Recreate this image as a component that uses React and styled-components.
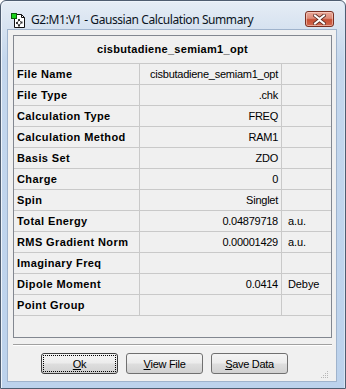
import React from 'react'
import styled, { createGlobalStyle } from 'styled-components'

const GlobalStyle = createGlobalStyle`
  html, body {
    margin: 0;
    padding: 0;
    background: #ffffff;
  }
  body {
    font-family: 'Liberation Sans', Arial, sans-serif;
  }
`

const rows = [
  { label: 'File Name', value: 'cisbutadiene_semiam1_opt', unit: '' },
  { label: 'File Type', value: '.chk', unit: '' },
  { label: 'Calculation Type', value: 'FREQ', unit: '' },
  { label: 'Calculation Method', value: 'RAM1', unit: '' },
  { label: 'Basis Set', value: 'ZDO', unit: '' },
  { label: 'Charge', value: '0', unit: '' },
  { label: 'Spin', value: 'Singlet', unit: '' },
  { label: 'Total Energy', value: '0.04879718', unit: 'a.u.' },
  { label: 'RMS Gradient Norm', value: '0.00001429', unit: 'a.u.' },
  { label: 'Imaginary Freq', value: '', unit: '' },
  { label: 'Dipole Moment', value: '0.0414', unit: 'Debye' },
  { label: 'Point Group', value: '', unit: '' },
]

const AppIcon = () => (
  <svg width='15' height='15' viewBox='0 0 15 15'>
    <path d='M3.5 1.5h7l3 3v10h-10z' fill='#fff' stroke='#111' />
    <path d='M10.5 1.5v3h3' fill='none' stroke='#111' />
    <g stroke='#444' strokeWidth='0.8'>
      <line x1='8' y1='7' x2='6' y2='10' />
      <line x1='8' y1='7' x2='10.5' y2='9.5' />
      <line x1='6' y1='10' x2='8' y2='12.5' />
      <line x1='10.5' y1='9.5' x2='8' y2='12.5' />
    </g>
    <g fill='#333'>
      <rect x='7' y='6' width='2' height='2' />
      <rect x='5' y='9' width='2' height='2' />
      <rect x='9.5' y='8.5' width='2' height='2' />
      <rect x='7' y='11.5' width='2' height='2' />
    </g>
    <rect x='0.5' y='0.5' width='5' height='5' fill='#19d119' stroke='#0a5a0a' />
  </svg>
)

const CloseGlyph = () => (
  <svg width='13' height='11' viewBox='0 0 13 11'>
    <path
      d='M2 1.5l4.5 3.5 4.5-3.5M2 9.5l4.5-3.5 4.5 3.5'
      fill='none'
      stroke='#5a2a22'
      strokeWidth='3.6'
      strokeLinecap='square'
    />
    <path
      d='M2 1.5l4.5 3.5 4.5-3.5M2 9.5l4.5-3.5 4.5 3.5'
      fill='none'
      stroke='#ffffff'
      strokeWidth='2'
      strokeLinecap='square'
    />
  </svg>
)

const GripDots = () => (
  <svg width='8' height='8' viewBox='0 0 8 8'>
    <g fill='#b7b7b7'>
      <rect x='6' y='0' width='1' height='1' />
      <rect x='4' y='2' width='1' height='1' />
      <rect x='6' y='2' width='1' height='1' />
      <rect x='2' y='4' width='1' height='1' />
      <rect x='4' y='4' width='1' height='1' />
      <rect x='6' y='4' width='1' height='1' />
      <rect x='0' y='6' width='1' height='1' />
      <rect x='2' y='6' width='1' height='1' />
      <rect x='4' y='6' width='1' height='1' />
      <rect x='6' y='6' width='1' height='1' />
    </g>
  </svg>
)

const App = () => {
  return (
    <>
      <GlobalStyle />
      <Window>
        <TitleBar>
          <IconSlot>
            <AppIcon />
          </IconSlot>
          <Title>G2:M1:V1 - Gaussian Calculation Summary</Title>
          <CloseButton>
            <CloseGlyph />
          </CloseButton>
        </TitleBar>
        <Client>
          <Table>
            <Header>cisbutadiene_semiam1_opt</Header>
            {rows.map((row) => (
              <Row key={row.label}>
                <Label>{row.label}</Label>
                <Value>{row.value}</Value>
                <Unit>{row.unit}</Unit>
              </Row>
            ))}
          </Table>
          <Separator />
          <ButtonRow>
            <Button $default>
              <u>O</u>k
            </Button>
            <Button>
              <u>V</u>iew File
            </Button>
            <Button>
              <u>S</u>ave Data
            </Button>
          </ButtonRow>
          <Grip>
            <GripDots />
          </Grip>
        </Client>
      </Window>
    </>
  )
}

export default App

const Window = styled.div`
  width: 346px;
  height: 389px;
  box-sizing: border-box;
  border: 1px solid #4f5d70;
  border-radius: 6px 6px 0 0;
  padding: 0 8px 6px 6px;
  display: flex;
  flex-direction: column;
  background: linear-gradient(
    to bottom,
    #e6edf5 0px,
    #d6e2f0 28px,
    #c4d7ed 60px,
    #bcd2ec 100%
  );
  box-shadow: inset 1px 1px 0 #eef4fb, inset -1px 0 0 #d8e5f4;
`

const TitleBar = styled.div`
  height: 28px;
  box-sizing: border-box;
  padding: 6px 3px 0 4px;
  display: flex;
  align-items: center;
`

const IconSlot = styled.div`
  width: 15px;
  height: 15px;
  margin-top: 4px;
  display: flex;
`

const Title = styled.div`
  flex: 1;
  margin-left: 5px;
  margin-top: 2px;
  font-family: 'Noto Sans', 'Open Sans', sans-serif;
  font-size: 12px;
  color: #0b1422;
  white-space: nowrap;
  letter-spacing: -0.42px;
`

const CloseButton = styled.div`
  width: 29px;
  height: 16px;
  box-sizing: border-box;
  margin-top: 2px;
  border: 1px solid #7a2f22;
  border-radius: 3px;
  display: flex;
  align-items: center;
  justify-content: center;
  background: linear-gradient(
    to bottom,
    #e9a99a 0%,
    #dc8a77 45%,
    #c75035 55%,
    #d0674e 100%
  );
  box-shadow: inset 0 0 0 1px rgba(255, 220, 210, 0.55);
`

const Client = styled.div`
  position: relative;
  flex: 1;
  box-sizing: border-box;
  border: 1px solid #9fb3cc;
  background: #f0f0f0;
  padding: 5px 0 0 5px;
  display: flex;
  flex-direction: column;
`

const Table = styled.div`
  width: 319px;
  height: 303px;
  box-sizing: border-box;
  border: 1px solid #828790;
  background: #f0f0f0;
  font-size: 11px;
  color: #000;
`

const Header = styled.div`
  height: 28px;
  box-sizing: border-box;
  border-bottom: 1px solid #c9c9c9;
  display: flex;
  align-items: center;
  justify-content: center;
  font-weight: bold;
  letter-spacing: 0.3px;
  padding-bottom: 1px;
`

const Row = styled.div`
  display: grid;
  grid-template-columns: 126px 142px 49px;
  height: 21px;
  box-sizing: border-box;
  border-bottom: 1px solid #c9c9c9;
  line-height: 20px;
`

const Cell = styled.div`
  white-space: nowrap;
  overflow: hidden;
`

const Label = styled(Cell)`
  border-right: 1px solid #c9c9c9;
  padding-left: 3px;
  font-weight: bold;
  letter-spacing: 0.4px;
  color: #000;
`

const Value = styled(Cell)`
  border-right: 1px solid #c9c9c9;
  padding-right: 3px;
  text-align: right;
  letter-spacing: -0.25px;
`

const Unit = styled(Cell)`
  padding-left: 6px;
  letter-spacing: -0.1px;
`

const Separator = styled.div`
  width: 319px;
  height: 2px;
  margin-top: 6px;
  border-top: 1px solid #a0a0a0;
  border-bottom: 1px solid #ffffff;
  box-sizing: border-box;
`

const ButtonRow = styled.div`
  display: flex;
  gap: 8px;
  margin-top: 7px;
  padding-left: 28px;
`

const Button = styled.div`
  position: relative;
  width: 77px;
  height: 21px;
  box-sizing: border-box;
  border: 1px solid ${(p) => (p.$default ? '#3c3c3c' : '#707070')};
  border-radius: 3px;
  background: linear-gradient(
    to bottom,
    #f4f4f4 0%,
    #ececec 48%,
    #dedede 52%,
    #d1d1d1 100%
  );
  display: flex;
  align-items: center;
  justify-content: center;
  font-size: 11px;
  letter-spacing: -0.3px;
  color: #000;

  u {
    text-decoration-thickness: 1px;
    text-underline-offset: 1px;
  }

  &::after {
    content: '';
    display: ${(p) => (p.$default ? 'block' : 'none')};
    position: absolute;
    inset: 1px;
    border: 1px dotted #000;
  }
`

const Grip = styled.div`
  position: absolute;
  right: 7px;
  bottom: 8px;
  width: 8px;
  height: 8px;
`
